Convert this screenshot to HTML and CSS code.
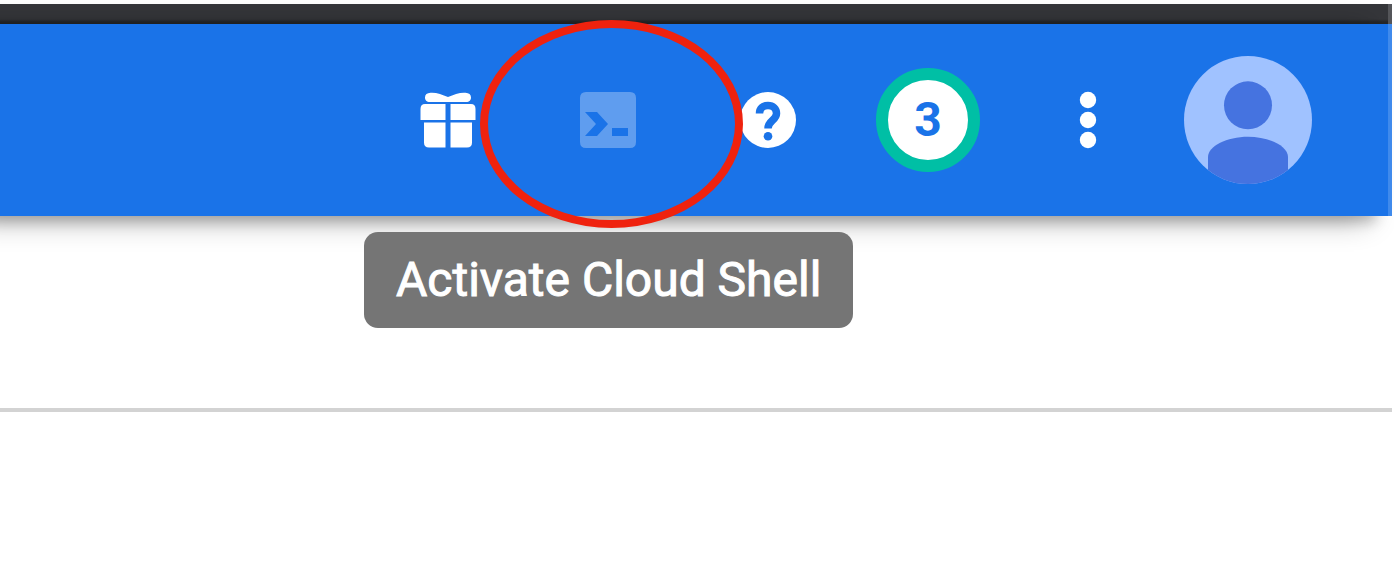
FILE: index.html
```html
<!DOCTYPE html>
<html lang="en">
<head>
<meta charset="utf-8">
<title>Cloud console</title>
<link rel="stylesheet" href="styles.css">
</head>
<body>
<div class="tab-strip"></div>
<header class="toolbar">
  <button class="tool" type="button" aria-label="Free trial">
    <svg class="icon" viewBox="0 0 56 56" aria-hidden="true">
      <path d="M10 10C6.500 10 5 8 5 5.500C5 2.500 7 1 10.500 .8C16 .3 22 2.500 28 5C34 2.500 40 .3 45.500 .8C49 1 51 2.500 51 5.500C51 8 49.500 10 46 10Z"/>
      <path d="M5 12H25.500V28H.5V17Q.5 12 5 12Z"/>
      <path d="M30.500 12H51Q55.500 12 55.500 17V28H30.500Z"/>
      <path d="M4 30.500H25.500V55.500H9Q4 55.500 4 50.500Z"/>
      <path d="M30.500 30.500H52V50.500Q52 55.500 47 55.500H30.500Z"/>
    </svg>
  </button>
  <div class="shell">
    <button class="tool" type="button" aria-label="Activate Cloud Shell" aria-describedby="shell-tip">
      <svg class="icon icon-shell" viewBox="0 0 56 56" aria-hidden="true">
        <path fill-rule="evenodd" d="M6 0H50Q56 0 56 6V50Q56 56 50 56H6Q0 56 0 50V6Q0 0 6 0ZM5 20L16 32L5 44H17L28 32L17 20ZM32 36V44H48V36Z"/>
      </svg>
    </button>
    <div class="tooltip" id="shell-tip" role="tooltip">Activate Cloud Shell</div>
    <div class="highlight"></div>
  </div>
  <button class="tool" type="button" aria-label="Help">
    <svg class="icon" viewBox="0 0 56 56" aria-hidden="true">
      <circle cx="28" cy="28" r="28"/>
      <path class="question" d="M19.500 21.500C19.500 16.500 23 13.500 28 13.500S36.500 16.800 36.500 21.500C36.500 28.500 28 28.500 28 36.500"/>
      <circle class="question-dot" cx="28" cy="44.200" r="4.300"/>
    </svg>
  </button>
  <button class="tool" type="button" aria-label="3 notifications"><span class="count">3</span></button>
  <button class="tool" type="button" aria-label="More options">
    <svg class="icon" viewBox="0 0 56 56" aria-hidden="true">
      <circle cx="28" cy="8" r="8.200"/>
      <circle cx="28" cy="28" r="8.200"/>
      <circle cx="28" cy="48" r="8.200"/>
    </svg>
  </button>
  <button class="tool" type="button" aria-label="Account">
    <svg class="avatar" viewBox="0 0 128 128" aria-hidden="true">
      <defs><clipPath id="disc"><circle cx="64" cy="64" r="64"/></clipPath></defs>
      <g clip-path="url(#disc)">
        <path class="avatar-back" d="M0 0H128V128H0Z"/>
        <circle cx="64" cy="49.300" r="24"/>
        <path d="M24 128V101C24 90 43 80.700 64 80.700S104 90 104 101V128Z"/>
      </g>
    </svg>
  </button>
</header>
<main class="page"><hr class="rule"></main>
</body>
</html>
```
FILE: styles.css
```css
body {
  margin: 0;
  padding: 4px 2px 0 0;
  background: #fff;
  font-family: Roboto, "Liberation Sans", sans-serif;
  overflow-x: hidden;
}

.tab-strip {
  height: 20px;
  border-right: 4px solid #55565a;
  background: linear-gradient(#35363a 75%, #262728 90%);
}

.toolbar {
  display: flex;
  justify-content: flex-end;
  height: 192px;
  padding-right: 60px;
  border-right: 4px solid #3f8aec;
  background: #1a73e8;
  box-shadow: -24px 4px 28px rgba(0, 0, 0, 0.32), -16px 6px 12px rgba(0, 0, 0, 0.2);
  position: relative;
}

.tool {
  display: flex;
  align-items: center;
  justify-content: center;
  width: 160px;
  height: 100%;
  padding: 0;
  border: 0;
  background: none;
  color: #1a73e8;
  font: inherit;
}

.icon {
  width: 56px;
  height: 56px;
  fill: #fff;
  overflow: visible;
}

.icon-shell {
  opacity: 0.3;
}

.question {
  fill: none;
  stroke: #1a73e8;
  stroke-width: 7.5;
}

.question-dot {
  fill: #1a73e8;
}

.count {
  box-sizing: border-box;
  width: 104px;
  height: 104px;
  border: 12px solid #00bfa5;
  border-radius: 50%;
  background: #fff;
  font-size: 48px;
  font-weight: 700;
  line-height: 80px;
}

.avatar {
  width: 128px;
  height: 128px;
  fill: #4573e0;
}

.avatar-back {
  fill: #a0c2ff;
}

.shell {
  position: relative;
  z-index: 1;
}

.tooltip {
  position: absolute;
  top: 208px;
  left: -164px;
  padding: 0 32px;
  border-radius: 14px;
  background: #757575;
  color: #fff;
  font-size: 48px;
  line-height: 96px;
  white-space: nowrap;
  -webkit-text-stroke: 1px #fff;
}

.highlight {
  position: absolute;
  top: -4px;
  left: -48px;
  box-sizing: border-box;
  width: 263px;
  height: 208px;
  border: 8px solid #ef220e;
  border-radius: 50%;
  pointer-events: none;
}

.page {
  padding-top: 192px;
}

.rule {
  height: 4px;
  margin: 0;
  border: 0;
  background: #d3d3d3;
}
```
